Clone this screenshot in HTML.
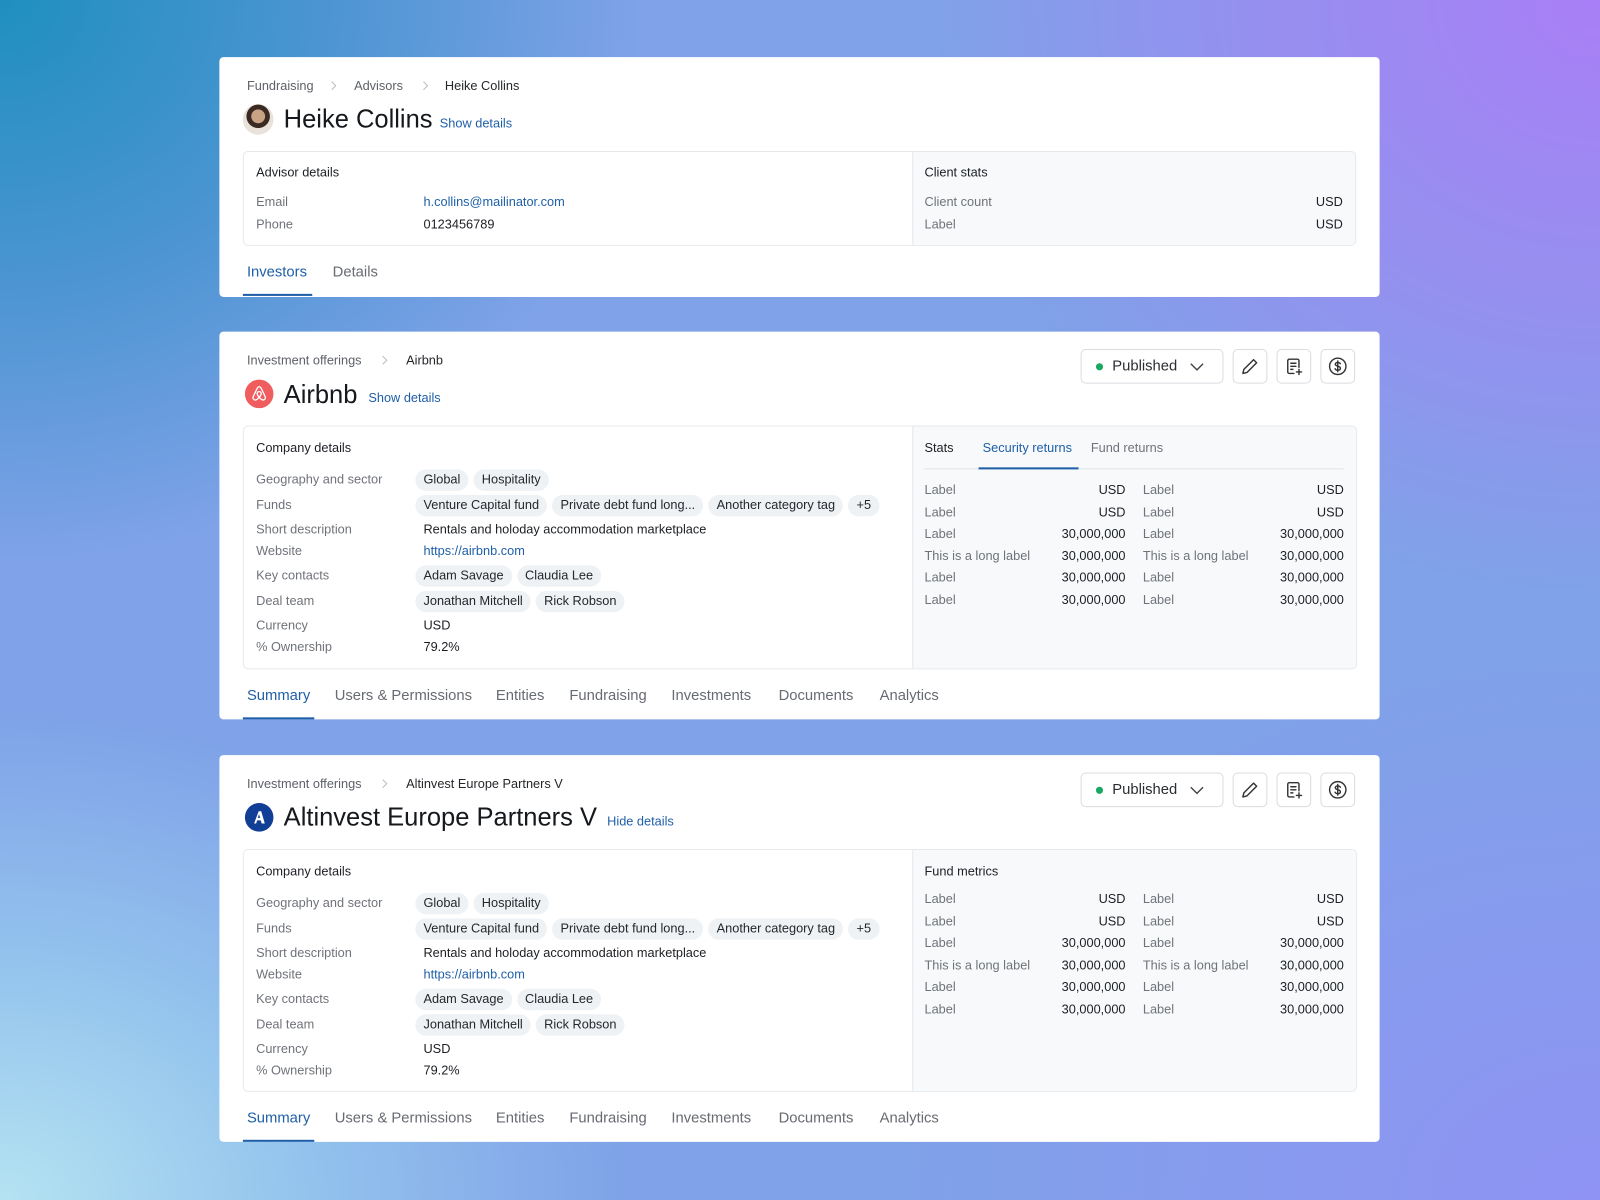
<!DOCTYPE html>
<html><head><meta charset="utf-8"><style>
*{margin:0;padding:0;box-sizing:border-box}
html,body{width:1600px;height:1200px;overflow:hidden}
body{font-family:"Liberation Sans",Arial,sans-serif;color:#1c1f24;
background:
radial-gradient(ellipse 900px 700px at 0% 100%, #b4e3f2 0%, rgba(160,215,240,0.6) 35%, rgba(160,215,240,0) 70%),
radial-gradient(ellipse 900px 800px at 100% 0%, #a97ff6 0%, rgba(169,127,246,0.5) 40%, rgba(169,127,246,0) 75%),
radial-gradient(ellipse 800px 700px at 0% 0%, #1f8fbf 0%, rgba(40,140,195,0.6) 40%, rgba(40,140,195,0) 80%),
radial-gradient(ellipse 900px 700px at 100% 100%, #8f93f4 0%, rgba(143,147,244,0) 80%),
#7fa2e8;}
#w{position:absolute;left:0;top:0;width:1568px;height:1176px;transform:scale(1.020408);transform-origin:0 0}
.card{position:absolute;left:215px;width:1137px;background:#fff;border-radius:4px}
.t{position:absolute;line-height:16px;font-size:12.5px;white-space:nowrap}
.g{color:#6f7379}
.b{color:#1f5fa8}
.bc{color:#5d6168}
.chev{position:absolute;width:10px;height:10px}
.title{position:absolute;font-size:25px;line-height:30px;white-space:nowrap;color:#15181c}
.box{position:absolute;left:23px;border:1px solid #e6e9ec;border-radius:5px;background:#fff;overflow:hidden}
.rp{position:absolute;top:0;bottom:0;background:#f7f9fb;border-left:1px solid #e6e9ec}
.r{text-align:right}
.tag{position:absolute;height:21px;display:flex;gap:5px}
.tag span{background:#eff2f5;border-radius:11px;padding:0 8px;line-height:21px;font-size:12.5px;color:#24272b;white-space:nowrap}
.tab{position:absolute;font-size:14.5px;line-height:18px;color:#676b72;white-space:nowrap}
.tab.b{color:#1f5fa8}
.ul{position:absolute;height:2px;background:#1f5fa8}
.btn{position:absolute;top:17px;height:34px;border:1px solid #d9dce0;border-radius:5px;background:#fff}
.btn svg{position:absolute;left:50%;top:50%;transform:translate(-50%,-50%)}
</style></head><body><div id="w">

<!-- CARD 1 -->
<div class="card" style="top:56px;height:235px">
  <span class="t bc" style="left:27px;top:20px">Fundraising</span>
  <svg class="chev" style="left:107px;top:23px" viewBox="0 0 10 10"><path d="M3 1l4 4-4 4" fill="none" stroke="#b8bcc2" stroke-width="1"/></svg>
  <span class="t bc" style="left:132px;top:20px">Advisors</span>
  <svg class="chev" style="left:197px;top:23px" viewBox="0 0 10 10"><path d="M3 1l4 4-4 4" fill="none" stroke="#b8bcc2" stroke-width="1"/></svg>
  <span class="t" style="left:221px;top:20px;color:#24272b">Heike Collins</span>
  <div style="position:absolute;left:23px;top:46px;width:30px;height:30px;border-radius:50%;background:radial-gradient(circle at 50% 40%,#c9a183 0 28%,#3b2a22 30% 48%,#e9e2da 50%)"></div>
  <div class="title" style="left:63px;top:46px">Heike Collins</div>
  <span class="t b" style="left:216px;top:57px">Show details</span>
  <div class="box" style="top:92px;width:1091px;height:93px">
    <div class="rp" style="left:655px;right:0"></div>
    <span class="t" style="left:12px;top:12px">Advisor details</span>
    <span class="t g" style="left:12px;top:41px">Email</span>
    <span class="t b" style="left:176px;top:41px">h.collins@mailinator.com</span>
    <span class="t g" style="left:12px;top:63px">Phone</span>
    <span class="t" style="left:176px;top:63px">0123456789</span>
    <span class="t" style="left:667px;top:12px">Client stats</span>
    <span class="t g" style="left:667px;top:41px">Client count</span>
    <span class="t r" style="right:12px;top:41px">USD</span>
    <span class="t g" style="left:667px;top:63px">Label</span>
    <span class="t r" style="right:12px;top:63px">USD</span>
  </div>
  <span class="tab b" style="left:27px;top:202px">Investors</span>
  <span class="tab" style="left:111px;top:202px">Details</span>
  <div class="ul" style="left:23px;width:68px;top:232px"></div>
</div>

<!-- CARD 2 -->
<div class="card" style="top:325px;height:380px">
  <span class="t bc" style="left:27px;top:20px">Investment offerings</span>
  <svg class="chev" style="left:157px;top:23px" viewBox="0 0 10 10"><path d="M3 1l4 4-4 4" fill="none" stroke="#b8bcc2" stroke-width="1"/></svg>
  <span class="t" style="left:183px;top:20px;color:#24272b">Airbnb</span>
  <div style="position:absolute;left:25px;top:47px;width:28px;height:28px;border-radius:50%;background:#ef5d5f">
    <svg width="28" height="28" viewBox="0 0 28 28"><path d="M14 7c-1 0-1.6.8-2.2 2l-3.6 7.6c-.8 1.8.4 3.4 2 3.4 1.5 0 2.7-1.3 3.8-2.6 1.1 1.3 2.3 2.6 3.8 2.6 1.6 0 2.8-1.6 2-3.4L16.2 9C15.6 7.8 15 7 14 7zM14 17.4c-1.2-1.4-2-2.8-2-3.8 0-1.1.9-1.8 2-1.8s2 .7 2 1.8c0 1-.8 2.4-2 3.8z" fill="none" stroke="#fff" stroke-width="1.3"/></svg>
  </div>
  <div class="title" style="left:63px;top:47px">Airbnb</div>
  <span class="t b" style="left:146px;top:57px">Show details</span>
  <div class="btn" style="left:844px;width:140px">
    <span style="position:absolute;left:14px;top:13px;width:7px;height:7px;border-radius:50%;background:#1aa862"></span>
    <span style="position:absolute;left:30px;top:7px;font-size:14.5px;line-height:18px;color:#2a2d31">Published</span>
    <svg style="left:auto;right:17px;transform:translateY(-50%)" width="16" height="16" viewBox="0 0 16 16"><path d="M2 5.5l6 6 6-6" fill="none" stroke="#444" stroke-width="1.4"/></svg>
  </div>
  <div class="btn" style="left:993px;width:34px"><svg width="20" height="20" viewBox="0 0 20 20"><path d="M13.5 3.5l3 3L7 16l-4 1 1-4z" fill="none" stroke="#333" stroke-width="1.4" stroke-linejoin="round"/></svg></div>
  <div class="btn" style="left:1036px;width:34px"><svg width="20" height="20" viewBox="0 0 20 20"><path d="M10 17H5.5A1.5 1.5 0 0 1 4 15.5v-11A1.5 1.5 0 0 1 5.5 3h8A1.5 1.5 0 0 1 15 4.5V11M7 7h5M7 10h5M7 13h2M15 13v5M12.5 15.5h5" fill="none" stroke="#333" stroke-width="1.4" stroke-linecap="round"/></svg></div>
  <div class="btn" style="left:1079px;width:34px"><svg width="20" height="20" viewBox="0 0 20 20"><circle cx="10" cy="10" r="8" fill="none" stroke="#333" stroke-width="1.4"/><path d="M12.5 7.5c-.4-.9-1.3-1.3-2.5-1.3-1.4 0-2.4.7-2.4 1.8 0 2.5 5 1.3 5 4 0 1.1-1.1 1.8-2.6 1.8-1.3 0-2.2-.5-2.6-1.4M10 4.8v10.4" fill="none" stroke="#333" stroke-width="1.4" stroke-linecap="round"/></svg></div>
  <div class="box" style="top:92px;width:1092px;height:239px">
    <div class="rp" style="left:655px;right:0"></div>
    <span class="t" style="left:12px;top:13px">Company details</span>
    <span class="t g" style="left:12px;top:44px">Geography and sector</span>
    <div class="tag" style="left:168px;top:42px"><span>Global</span><span>Hospitality</span></div>
    <span class="t g" style="left:12px;top:69px">Funds</span>
    <div class="tag" style="left:168px;top:67px"><span>Venture Capital fund</span><span>Private debt fund long...</span><span>Another category tag</span><span>+5</span></div>
    <span class="t g" style="left:12px;top:93px">Short description</span>
    <span class="t" style="left:176px;top:93px">Rentals and holoday accommodation marketplace</span>
    <span class="t g" style="left:12px;top:114px">Website</span>
    <span class="t b" style="left:176px;top:114px">https://airbnb.com</span>
    <span class="t g" style="left:12px;top:138px">Key contacts</span>
    <div class="tag" style="left:168px;top:136px"><span>Adam Savage</span><span>Claudia Lee</span></div>
    <span class="t g" style="left:12px;top:163px">Deal team</span>
    <div class="tag" style="left:168px;top:161px"><span>Jonathan Mitchell</span><span>Rick Robson</span></div>
    <span class="t g" style="left:12px;top:187px">Currency</span>
    <span class="t" style="left:176px;top:187px">USD</span>
    <span class="t g" style="left:12px;top:208px">% Ownership</span>
    <span class="t" style="left:176px;top:208px">79.2%</span>
    <span class="t" style="left:667px;top:13px">Stats</span>
    <span class="t b" style="left:724px;top:13px">Security returns</span>
    <span class="t g" style="left:830px;top:13px">Fund returns</span>
    <div style="position:absolute;left:667px;width:411px;top:41px;height:1px;background:#e3e6ea"></div>
    <div class="ul" style="left:720px;width:98px;top:40px"></div>
    <div style="position:absolute;left:667px;top:52px;width:411px;font-size:12.5px;line-height:21.6px">
      <div style="display:flex"><div style="width:197px;display:flex;justify-content:space-between"><span class="g">Label</span><span>USD</span></div><div style="flex:1;margin-left:17px;display:flex;justify-content:space-between"><span class="g">Label</span><span>USD</span></div></div>
      <div style="display:flex"><div style="width:197px;display:flex;justify-content:space-between"><span class="g">Label</span><span>USD</span></div><div style="flex:1;margin-left:17px;display:flex;justify-content:space-between"><span class="g">Label</span><span>USD</span></div></div>
      <div style="display:flex"><div style="width:197px;display:flex;justify-content:space-between"><span class="g">Label</span><span>30,000,000</span></div><div style="flex:1;margin-left:17px;display:flex;justify-content:space-between"><span class="g">Label</span><span>30,000,000</span></div></div>
      <div style="display:flex"><div style="width:197px;display:flex;justify-content:space-between"><span class="g">This is a long label</span><span>30,000,000</span></div><div style="flex:1;margin-left:17px;display:flex;justify-content:space-between"><span class="g">This is a long label</span><span>30,000,000</span></div></div>
      <div style="display:flex"><div style="width:197px;display:flex;justify-content:space-between"><span class="g">Label</span><span>30,000,000</span></div><div style="flex:1;margin-left:17px;display:flex;justify-content:space-between"><span class="g">Label</span><span>30,000,000</span></div></div>
      <div style="display:flex"><div style="width:197px;display:flex;justify-content:space-between"><span class="g">Label</span><span>30,000,000</span></div><div style="flex:1;margin-left:17px;display:flex;justify-content:space-between"><span class="g">Label</span><span>30,000,000</span></div></div>
    </div>
  </div>
  <span class="tab b" style="left:27px;top:348px">Summary</span>
  <span class="tab" style="left:113px;top:348px">Users &amp; Permissions</span>
  <span class="tab" style="left:271px;top:348px">Entities</span>
  <span class="tab" style="left:343px;top:348px">Fundraising</span>
  <span class="tab" style="left:443px;top:348px">Investments</span>
  <span class="tab" style="left:548px;top:348px">Documents</span>
  <span class="tab" style="left:647px;top:348px">Analytics</span>
  <div class="ul" style="left:23px;width:70px;top:378px"></div>
</div>

<!-- CARD 3 -->
<div class="card" style="top:740px;height:379px">
  <span class="t bc" style="left:27px;top:20px">Investment offerings</span>
  <svg class="chev" style="left:157px;top:23px" viewBox="0 0 10 10"><path d="M3 1l4 4-4 4" fill="none" stroke="#b8bcc2" stroke-width="1"/></svg>
  <span class="t" style="left:183px;top:20px;color:#24272b">Altinvest Europe Partners V</span>
  <div style="position:absolute;left:25px;top:47px;width:28px;height:28px;border-radius:50%;background:#123f96">
    <svg width="28" height="28" viewBox="0 0 28 28"><path d="M9 20l4.5-12h2.5L19.5 20h-3l-1-3h-3.5l-1 3zM12.6 14.5h2.4L13.8 11z" fill="#fff"/></svg>
  </div>
  <div class="title" style="left:63px;top:46px">Altinvest Europe Partners V</div>
  <span class="t b" style="left:380px;top:57px">Hide details</span>
  <div class="btn" style="left:844px;width:140px">
    <span style="position:absolute;left:14px;top:13px;width:7px;height:7px;border-radius:50%;background:#1aa862"></span>
    <span style="position:absolute;left:30px;top:7px;font-size:14.5px;line-height:18px;color:#2a2d31">Published</span>
    <svg style="left:auto;right:17px;transform:translateY(-50%)" width="16" height="16" viewBox="0 0 16 16"><path d="M2 5.5l6 6 6-6" fill="none" stroke="#444" stroke-width="1.4"/></svg>
  </div>
  <div class="btn" style="left:993px;width:34px"><svg width="20" height="20" viewBox="0 0 20 20"><path d="M13.5 3.5l3 3L7 16l-4 1 1-4z" fill="none" stroke="#333" stroke-width="1.4" stroke-linejoin="round"/></svg></div>
  <div class="btn" style="left:1036px;width:34px"><svg width="20" height="20" viewBox="0 0 20 20"><path d="M10 17H5.5A1.5 1.5 0 0 1 4 15.5v-11A1.5 1.5 0 0 1 5.5 3h8A1.5 1.5 0 0 1 15 4.5V11M7 7h5M7 10h5M7 13h2M15 13v5M12.5 15.5h5" fill="none" stroke="#333" stroke-width="1.4" stroke-linecap="round"/></svg></div>
  <div class="btn" style="left:1079px;width:34px"><svg width="20" height="20" viewBox="0 0 20 20"><circle cx="10" cy="10" r="8" fill="none" stroke="#333" stroke-width="1.4"/><path d="M12.5 7.5c-.4-.9-1.3-1.3-2.5-1.3-1.4 0-2.4.7-2.4 1.8 0 2.5 5 1.3 5 4 0 1.1-1.1 1.8-2.6 1.8-1.3 0-2.2-.5-2.6-1.4M10 4.8v10.4" fill="none" stroke="#333" stroke-width="1.4" stroke-linecap="round"/></svg></div>
  <div class="box" style="top:92px;width:1092px;height:238px">
    <div class="rp" style="left:655px;right:0"></div>
    <span class="t" style="left:12px;top:13px">Company details</span>
    <span class="t g" style="left:12px;top:44px">Geography and sector</span>
    <div class="tag" style="left:168px;top:42px"><span>Global</span><span>Hospitality</span></div>
    <span class="t g" style="left:12px;top:69px">Funds</span>
    <div class="tag" style="left:168px;top:67px"><span>Venture Capital fund</span><span>Private debt fund long...</span><span>Another category tag</span><span>+5</span></div>
    <span class="t g" style="left:12px;top:93px">Short description</span>
    <span class="t" style="left:176px;top:93px">Rentals and holoday accommodation marketplace</span>
    <span class="t g" style="left:12px;top:114px">Website</span>
    <span class="t b" style="left:176px;top:114px">https://airbnb.com</span>
    <span class="t g" style="left:12px;top:138px">Key contacts</span>
    <div class="tag" style="left:168px;top:136px"><span>Adam Savage</span><span>Claudia Lee</span></div>
    <span class="t g" style="left:12px;top:163px">Deal team</span>
    <div class="tag" style="left:168px;top:161px"><span>Jonathan Mitchell</span><span>Rick Robson</span></div>
    <span class="t g" style="left:12px;top:187px">Currency</span>
    <span class="t" style="left:176px;top:187px">USD</span>
    <span class="t g" style="left:12px;top:208px">% Ownership</span>
    <span class="t" style="left:176px;top:208px">79.2%</span>
    <span class="t" style="left:667px;top:13px">Fund metrics</span>
    <div style="position:absolute;left:667px;top:38px;width:411px;font-size:12.5px;line-height:21.6px">
      <div style="display:flex"><div style="width:197px;display:flex;justify-content:space-between"><span class="g">Label</span><span>USD</span></div><div style="flex:1;margin-left:17px;display:flex;justify-content:space-between"><span class="g">Label</span><span>USD</span></div></div>
      <div style="display:flex"><div style="width:197px;display:flex;justify-content:space-between"><span class="g">Label</span><span>USD</span></div><div style="flex:1;margin-left:17px;display:flex;justify-content:space-between"><span class="g">Label</span><span>USD</span></div></div>
      <div style="display:flex"><div style="width:197px;display:flex;justify-content:space-between"><span class="g">Label</span><span>30,000,000</span></div><div style="flex:1;margin-left:17px;display:flex;justify-content:space-between"><span class="g">Label</span><span>30,000,000</span></div></div>
      <div style="display:flex"><div style="width:197px;display:flex;justify-content:space-between"><span class="g">This is a long label</span><span>30,000,000</span></div><div style="flex:1;margin-left:17px;display:flex;justify-content:space-between"><span class="g">This is a long label</span><span>30,000,000</span></div></div>
      <div style="display:flex"><div style="width:197px;display:flex;justify-content:space-between"><span class="g">Label</span><span>30,000,000</span></div><div style="flex:1;margin-left:17px;display:flex;justify-content:space-between"><span class="g">Label</span><span>30,000,000</span></div></div>
      <div style="display:flex"><div style="width:197px;display:flex;justify-content:space-between"><span class="g">Label</span><span>30,000,000</span></div><div style="flex:1;margin-left:17px;display:flex;justify-content:space-between"><span class="g">Label</span><span>30,000,000</span></div></div>
    </div>
  </div>
  <span class="tab b" style="left:27px;top:347px">Summary</span>
  <span class="tab" style="left:113px;top:347px">Users &amp; Permissions</span>
  <span class="tab" style="left:271px;top:347px">Entities</span>
  <span class="tab" style="left:343px;top:347px">Fundraising</span>
  <span class="tab" style="left:443px;top:347px">Investments</span>
  <span class="tab" style="left:548px;top:347px">Documents</span>
  <span class="tab" style="left:647px;top:347px">Analytics</span>
  <div class="ul" style="left:23px;width:70px;top:377px"></div>
</div>

</div></body></html>
